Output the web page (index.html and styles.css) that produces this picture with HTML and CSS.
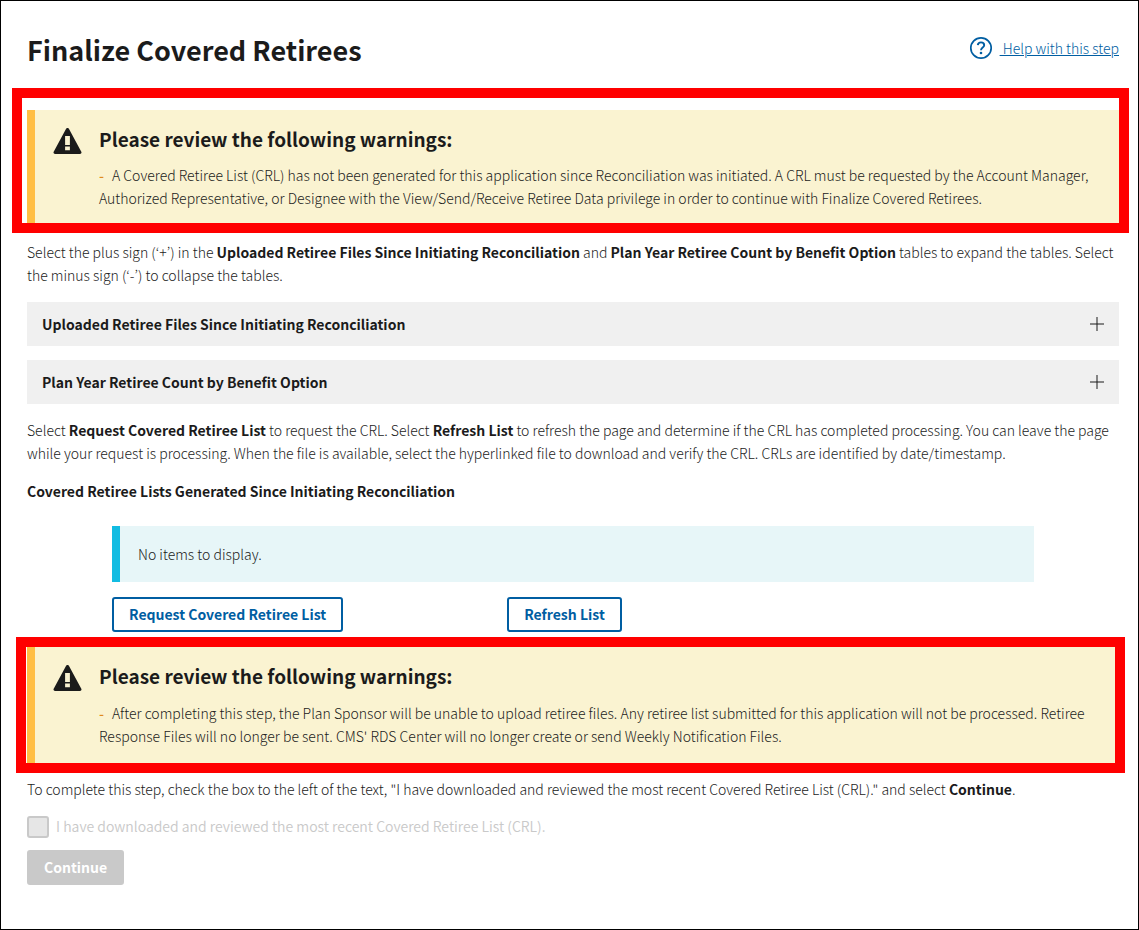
FILE: index.html
```html
<!DOCTYPE html>
<html lang="en">
<head>
    <meta charset="UTF-8">
    <meta name="viewport" content="width=device-width, initial-scale=1">
    <title>Finalize Covered Retirees</title>
    <link rel="stylesheet" href="styles.css">
</head>
<body>
<main class="page">
    <header class="page-header">
        <h1>Finalize Covered Retirees</h1>
        <div class="help">
            <svg class="help-icon" viewBox="0 0 24 24" aria-hidden="true">
                <circle cx="12" cy="12" r="10.2" fill="none" stroke="currentColor" stroke-width="1.7"/>
                <path d="M8.8 9.2C9 7.3 10.3 6.4 12 6.4c1.9 0 3.2 1.1 3.2 2.8 0 2.3-3.2 2.4-3.2 5" fill="none" stroke="currentColor" stroke-width="1.9"/>
                <circle cx="12" cy="17" r="1.3" fill="currentColor"/>
            </svg>
            <a href="#help">&nbsp;Help with this step</a>
        </div>
    </header>

    <section class="callout callout-top">
        <div class="alert">
            <svg class="alert-icon" viewBox="0 0 28 26" aria-hidden="true">
                <path fill="currentColor" fill-rule="evenodd" d="M12.6.8a1.6 1.6 0 0 1 2.8 0l12.4 22.9A1.6 1.6 0 0 1 26.4 26H1.6A1.6 1.6 0 0 1 .2 23.7zM11.6 8v9h4.8V8zM11.6 18.5v3.8h4.8v-3.8z"/>
            </svg>
            <div class="alert-body">
                <h2>Please review the following warnings:</h2>
                <p><span class="dash">-</span>A Covered Retiree List (CRL) has not been generated for this application since Reconciliation was initiated. A CRL must be requested by the Account Manager, Authorized Representative, or Designee with the View/Send/Receive Retiree Data privilege in order to continue with Finalize Covered Retirees.</p>
            </div>
        </div>
    </section>

    <p>Select the plus sign (‘+’) in the <b>Uploaded Retiree Files Since Initiating Reconciliation</b> and <b>Plan Year Retiree Count by Benefit Option</b> tables to expand the tables. Select the minus sign (‘-’) to collapse the tables.</p>

    <div class="accordion">
        <button type="button" class="accordion-item" aria-expanded="false">
            <span>Uploaded Retiree Files Since Initiating Reconciliation</span>
            <svg class="plus" viewBox="0 0 14 14" aria-hidden="true"><path d="M0 7h14M7 0v14"/></svg>
        </button>
        <button type="button" class="accordion-item" aria-expanded="false">
            <span>Plan Year Retiree Count by Benefit Option</span>
            <svg class="plus" viewBox="0 0 14 14" aria-hidden="true"><path d="M0 7h14M7 0v14"/></svg>
        </button>
    </div>

    <p>Select <b>Request Covered Retiree List</b> to request the CRL. Select <b>Refresh List</b> to refresh the page and determine if the CRL has completed processing. You can leave the page while your request is processing. When the file is available, select the hyperlinked file to download and verify the CRL. CRLs are identified by date/timestamp.</p>

    <h3>Covered Retiree Lists Generated Since Initiating Reconciliation</h3>

    <div class="lists">
        <div class="info">No items to display.</div>
        <div class="actions">
            <div><button type="button" class="btn">Request Covered Retiree List</button></div>
            <div><button type="button" class="btn">Refresh List</button></div>
        </div>
    </div>

    <section class="callout callout-bottom">
        <div class="alert">
            <svg class="alert-icon" viewBox="0 0 28 26" aria-hidden="true">
                <path fill="currentColor" fill-rule="evenodd" d="M12.6.8a1.6 1.6 0 0 1 2.8 0l12.4 22.9A1.6 1.6 0 0 1 26.4 26H1.6A1.6 1.6 0 0 1 .2 23.7zM11.6 8v9h4.8V8zM11.6 18.5v3.8h4.8v-3.8z"/>
            </svg>
            <div class="alert-body">
                <h2>Please review the following warnings:</h2>
                <p><span class="dash">-</span>After completing this step, the Plan Sponsor will be unable to upload retiree files. Any retiree list submitted for this application will not be processed. Retiree Response Files will no longer be sent. CMS' RDS Center will no longer create or send Weekly Notification Files.</p>
            </div>
        </div>
    </section>

    <form>
        <p>To complete this step, check the box to the left of the text, "I have downloaded and reviewed the most recent Covered Retiree List (CRL)." and select <b>Continue</b>.</p>
        <div class="check">
            <input type="checkbox" id="reviewed" disabled>
            <label for="reviewed">I have downloaded and reviewed the most recent Covered Retiree List (CRL).</label>
        </div>
        <button type="submit" class="btn btn-primary" disabled>Continue</button>
    </form>
</main>
</body>
</html>
```
FILE: styles.css
```css
* {
    box-sizing: border-box;
}

body, h1, h2, h3, p {
    margin: 0;
}

body, button {
    font-family: "Source Sans Pro", "Noto Sans CJK KR", sans-serif;
    font-size: 14px;
    line-height: 23px;
    color: #1b1b1b;
}

body {
    font-weight: 300;
    background: #fff;
}

b {
    font-weight: 700;
}

.page {
    min-height: 100vh;
    padding: 29px 19px 44px 26px;
    border: 1px solid #000;
}

.page-header {
    display: flex;
    justify-content: space-between;
    align-items: flex-start;
    height: 58px;
}

h1 {
    font-size: 27px;
    line-height: 40px;
}

.help {
    display: flex;
    align-items: center;
    gap: 7px;
    padding-top: 6px;
    color: #005ea2;
}

.help a {
    color: #005ea2;
}

.help-icon {
    width: 24px;
    height: 24px;
}

/* red highlight around the warnings */
.callout {
    border: 10px solid #f00;
}

.callout-top {
    margin: 0 -10px 8px -15px;
    padding: 12px 0 0 5px;
}

.callout-bottom {
    margin: 5px -6px 5px -11px;
    padding-left: 1px;
}

.alert {
    display: flex;
    gap: 17px;
    padding: 17px 16px 13px 18px;
    border-left: 8px solid #ffbe44;
    background: #faf3d1;
}

.callout-bottom .alert {
    padding-right: 12px;
    padding-bottom: 15px;
}

.alert-icon {
    flex: none;
    width: 29px;
    height: 26px;
    margin-top: 1px;
}

.alert h2 {
    margin-bottom: 13px;
    font-size: 19px;
    line-height: 24px;
}

.callout-bottom h2 {
    margin-bottom: 14px;
}

.dash {
    margin-right: 8px;
    color: #e08a1e;
    font-weight: 500;
}

.accordion {
    display: grid;
    gap: 14px;
    margin: 15px 0;
}

.accordion-item {
    display: flex;
    justify-content: space-between;
    align-items: center;
    height: 44px;
    padding: 0 15px;
    border: 0;
    background: #f0f0f0;
    font-weight: 700;
    text-align: left;
}

.plus {
    width: 14px;
    height: 14px;
    stroke: #1b1b1b;
}

h3 {
    margin: 15px 0 23px;
    font-size: 14px;
    line-height: 23px;
}

.lists {
    margin: 0 85px;
}

.info {
    padding: 17px 18px 16px;
    border-left: 8px solid #12bce2;
    background: #e7f6f8;
}

.actions {
    display: grid;
    grid-template-columns: 3fr 4fr;
    padding-top: 15px;
}

.btn {
    height: 35px;
    padding: 0 15px;
    border: 2px solid #005ea2;
    border-radius: 3px;
    background: #fff;
    color: #005ea2;
    font-weight: 700;
}

.btn-primary {
    border-color: #c9c9c9;
    background: #c9c9c9;
    color: #fff;
}

.check {
    display: flex;
    align-items: center;
    gap: 7px;
    margin: 14px 0 12px;
    color: #c9c9c9;
    font-weight: 350;
}

.check input {
    appearance: none;
    width: 22px;
    height: 22px;
    margin: 0;
    border: 2px solid #c9c9c9;
    border-radius: 3px;
    background: #e6e6e6;
}
```
